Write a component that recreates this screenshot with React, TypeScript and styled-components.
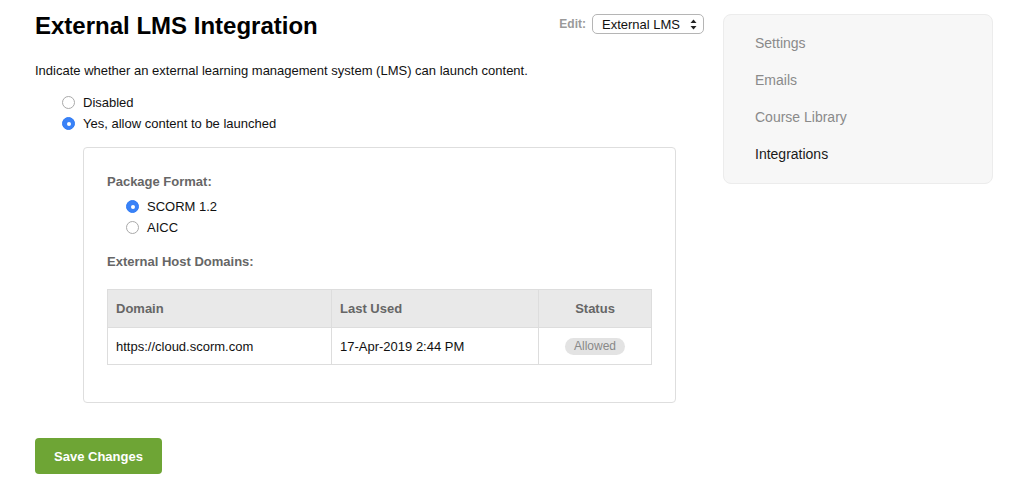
import { useState } from 'react';
import styled, { createGlobalStyle } from 'styled-components';

const GlobalStyle = createGlobalStyle`
  body {
    margin: 0;
    background: #ffffff;
    font-family: 'Liberation Sans', Arial, Helvetica, sans-serif;
    color: #111111;
  }
`;

const domains = [
  { domain: 'https://cloud.scorm.com', lastUsed: '17-Apr-2019 2:44 PM', status: 'Allowed' },
];

const navItems = ['Settings', 'Emails', 'Course Library', 'Integrations'];

function Radio({ checked, label, onClick }: { checked: boolean; label: string; onClick: () => void }) {
  return (
    <RadioRow onClick={onClick}>
      <RadioDot checked={checked} />
      <span>{label}</span>
    </RadioRow>
  );
}

export default function App() {
  const [enabled, setEnabled] = useState(true);
  const [format, setFormat] = useState('scorm');

  return (
    <Page>
      <GlobalStyle />
      <Main>
        <Header>
          <Title>External LMS Integration</Title>
          <EditArea>
            <EditLabel>Edit:</EditLabel>
            <SelectBox>
              <span>External LMS</span>
              <svg width="7" height="11" viewBox="0 0 7 11">
                <path d="M3.5 0.5 L6.5 4 L0.5 4 Z" fill="#222" />
                <path d="M3.5 10.5 L6.5 7 L0.5 7 Z" fill="#222" />
              </svg>
            </SelectBox>
          </EditArea>
        </Header>
        <Description>
          Indicate whether an external learning management system (LMS) can launch content.
        </Description>
        <RadioList indent={27} top={13}>
          <Radio checked={!enabled} label="Disabled" onClick={() => setEnabled(false)} />
          <Radio checked={enabled} label="Yes, allow content to be launched" onClick={() => setEnabled(true)} />
        </RadioList>
        <Panel>
          <FieldLabel>Package Format:</FieldLabel>
          <RadioList indent={19} top={6}>
            <Radio checked={format === 'scorm'} label="SCORM 1.2" onClick={() => setFormat('scorm')} />
            <Radio checked={format === 'aicc'} label="AICC" onClick={() => setFormat('aicc')} />
          </RadioList>
          <FieldLabel top={16}>External Host Domains:</FieldLabel>
          <Table>
            <thead>
              <tr>
                <Th w={224}>Domain</Th>
                <Th w={207}>Last Used</Th>
                <Th center>Status</Th>
              </tr>
            </thead>
            <tbody>
              {domains.map(d => (
                <tr key={d.domain}>
                  <Td>{d.domain}</Td>
                  <Td>{d.lastUsed}</Td>
                  <Td center>
                    <Pill>{d.status}</Pill>
                  </Td>
                </tr>
              ))}
            </tbody>
          </Table>
        </Panel>
        <SaveButton>Save Changes</SaveButton>
      </Main>
      <Sidebar>
        {navItems.map(item => (
          <NavItem key={item} active={item === 'Integrations'}>
            {item}
          </NavItem>
        ))}
      </Sidebar>
    </Page>
  );
}

const Page = styled.div`
  display: flex;
  align-items: flex-start;
  gap: 19px;
  padding: 12px 0 0 35px;
`;

const Main = styled.div`
  width: 669px;
  display: flex;
  flex-direction: column;
  align-items: flex-start;
`;

const Header = styled.div`
  width: 100%;
  display: flex;
  justify-content: space-between;
  align-items: flex-start;
`;

const Title = styled.h1`
  margin: 0;
  font-size: 24px;
  line-height: 28px;
  font-weight: 700;
  color: #000000;
`;

const EditArea = styled.div`
  display: flex;
  align-items: center;
  gap: 6px;
  margin-top: 2px;
`;

const EditLabel = styled.span`
  font-size: 12px;
  font-weight: 700;
  color: #9a9a9a;
`;

const SelectBox = styled.div`
  box-sizing: border-box;
  width: 112px;
  height: 20px;
  border: 1px solid #b5b5b5;
  border-radius: 5px;
  display: flex;
  align-items: center;
  justify-content: space-between;
  padding: 0 6px 0 9px;
  font-size: 13px;
  color: #111111;
  background: #ffffff;
`;

const Description = styled.p`
  margin: 23px 0 0;
  font-size: 13px;
  line-height: 16px;
  color: #111111;
`;

const RadioList = styled.div<{ indent: number; top?: number }>`
  display: flex;
  flex-direction: column;
  padding-left: ${props => props.indent}px;
  margin-top: ${props => (props.top !== undefined ? props.top : 12)}px;
`;

const RadioRow = styled.label`
  display: flex;
  align-items: center;
  gap: 8px;
  height: 21px;
  font-size: 13px;
  color: #111111;
  cursor: pointer;
`;

const RadioDot = styled.span<{ checked: boolean }>`
  box-sizing: border-box;
  width: 13px;
  height: 13px;
  border-radius: 50%;
  border: 1px solid ${props => (props.checked ? '#2f7bf5' : '#a9a9a9')};
  background: ${props => (props.checked ? '#3a82f7' : '#ffffff')};
  display: flex;
  align-items: center;
  justify-content: center;
  &::after {
    content: '';
    width: 4px;
    height: 4px;
    border-radius: 50%;
    background: #ffffff;
    display: ${props => (props.checked ? 'block' : 'none')};
  }
`;

const Panel = styled.section`
  box-sizing: border-box;
  width: 593px;
  margin: 13px 0 0 48px;
  padding: 26px 23px 37px;
  border: 1px solid #dedede;
  border-radius: 4px;
  display: flex;
  flex-direction: column;
  align-items: flex-start;
`;

const FieldLabel = styled.div<{ top?: number }>`
  margin-top: ${props => props.top || 0}px;
  font-size: 13px;
  line-height: 16px;
  font-weight: 700;
  color: #666666;
`;

const Table = styled.table`
  margin-top: 19px;
  width: 545px;
  border-collapse: collapse;
  font-size: 13px;
  border: 1px solid #dddddd;
`;

const Th = styled.th<{ w?: number; center?: boolean }>`
  width: ${props => (props.w ? `${props.w}px` : 'auto')};
  height: 38px;
  box-sizing: border-box;
  padding: 0 8px;
  text-align: ${props => (props.center ? 'center' : 'left')};
  background: #e9e9e9;
  color: #666666;
  font-weight: 700;
  border: 1px solid #dddddd;
`;

const Td = styled.td<{ center?: boolean }>`
  height: 37px;
  box-sizing: border-box;
  padding: 1px 8px 0;
  text-align: ${props => (props.center ? 'center' : 'left')};
  color: #111111;
  border: 1px solid #dddddd;
`;

const Pill = styled.span`
  display: inline-block;
  width: 60px;
  height: 17px;
  line-height: 17px;
  border-radius: 9px;
  background: #e3e3e3;
  color: #888888;
  font-size: 12px;
  text-align: center;
`;

const SaveButton = styled.button`
  margin-top: 35px;
  width: 127px;
  height: 36px;
  border: none;
  border-radius: 4px;
  background: #6ea535;
  color: #ffffff;
  font-family: 'Liberation Sans', Arial, Helvetica, sans-serif;
  font-size: 13px;
  font-weight: 700;
  cursor: pointer;
`;

const Sidebar = styled.nav`
  box-sizing: border-box;
  width: 270px;
  margin-top: 2px;
  padding: 10px 0 10px 31px;
  background: #f7f7f7;
  border: 1px solid #ececec;
  border-radius: 8px;
  display: flex;
  flex-direction: column;
`;

const NavItem = styled.a<{ active?: boolean }>`
  display: block;
  height: 37px;
  line-height: 37px;
  font-size: 14px;
  color: ${props => (props.active ? '#1a1a1a' : '#8a8a8a')};
  text-decoration: none;
  cursor: pointer;
`;
